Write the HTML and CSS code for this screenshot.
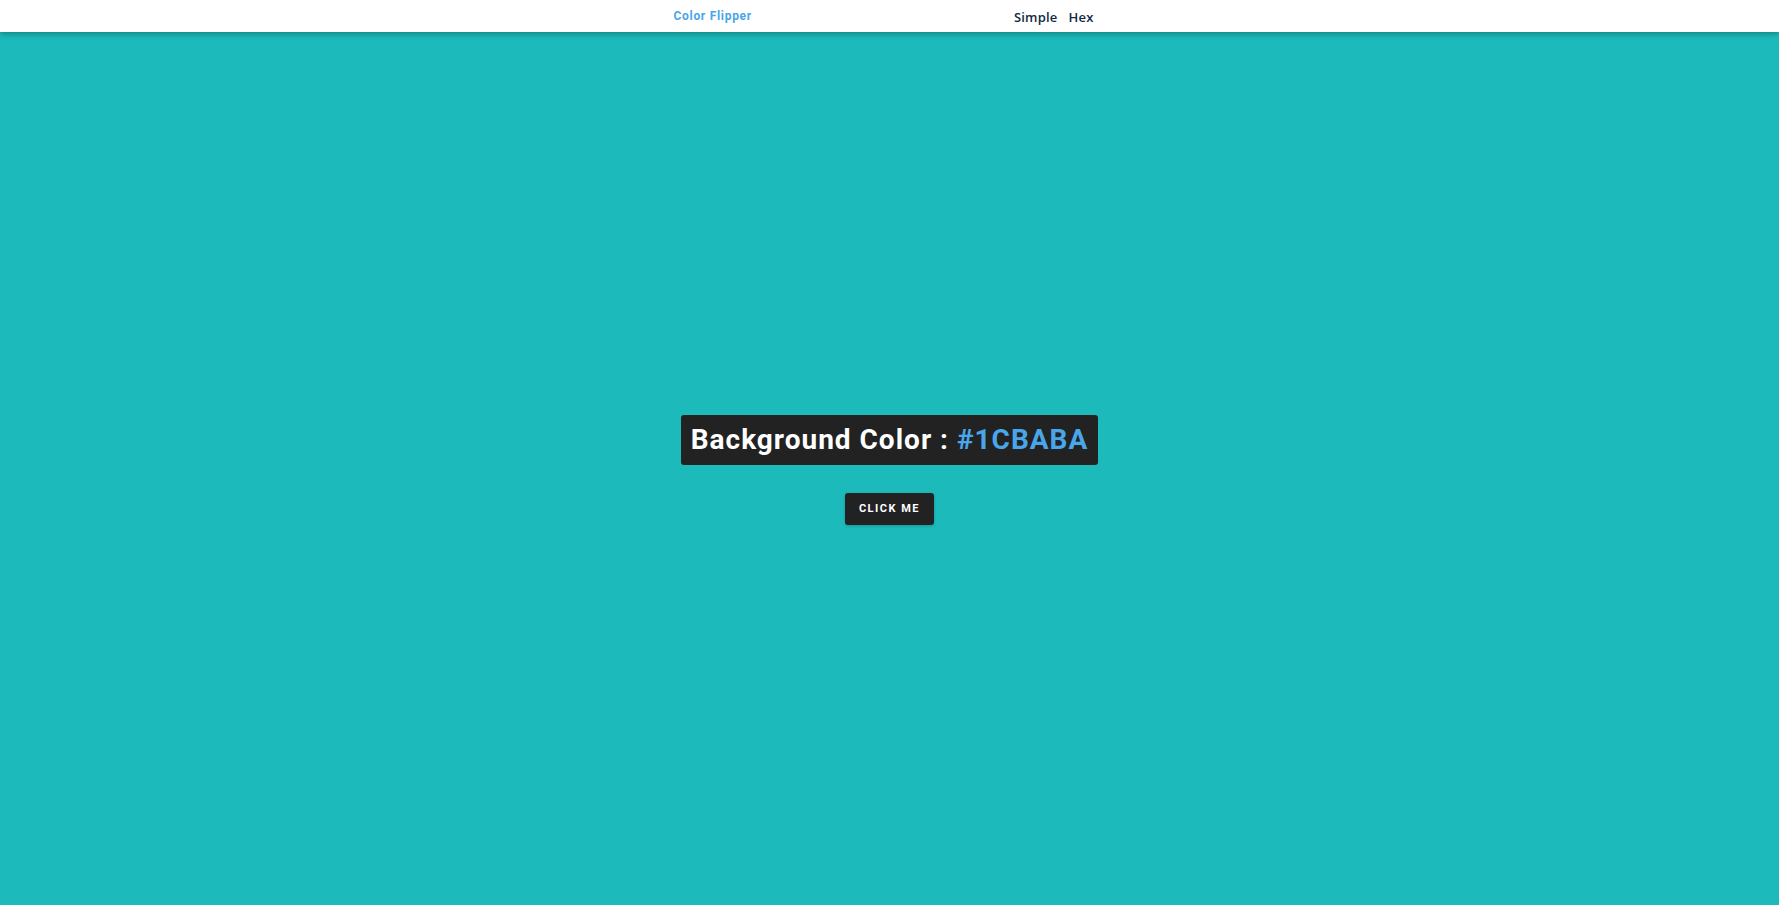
FILE: index.html
```html
<!DOCTYPE html>
<html lang="en">
<head>
<meta charset="utf-8">
<title>Color Flipper</title>
<link rel="stylesheet" href="styles.css">
</head>
<body>
<nav class="nav">
  <div class="nav-center">
    <h4 class="brand">Color Flipper</h4>
    <ul class="nav-links">
      <li><a href="#">Simple</a></li>
      <li><a href="#">Hex</a></li>
    </ul>
  </div>
</nav>
<main class="main">
  <div class="container">
    <h2 class="title">Background Color : <span class="color">#1CBABA</span></h2>
    <button class="btn">click me</button>
  </div>
</main>
</body>
</html>
```
FILE: styles.css
```css
* { box-sizing: border-box; margin: 0; padding: 0; }
html, body { height: 100%; }
body {
  font-family: Roboto, "Liberation Sans", sans-serif;
  background: #1cbaba;
  display: flex;
  flex-direction: column;
}
.nav {
  height: 32px;
  background: #fff;
  box-shadow: 0 2px 6px rgba(0,0,0,0.3);
  position: relative;
  z-index: 1;
  flex-shrink: 0;
}
.nav-center {
  width: 432px;
  height: 100%;
  margin: 0 auto;
  display: flex;
  align-items: center;
  justify-content: space-between;
  padding-right: 12px;
}
.brand {
  font-size: 12px;
  font-weight: 700;
  color: #49a6e9;
  letter-spacing: 0.7px;
}
.nav-links {
  list-style: none;
  display: flex;
  gap: 11px;
}
.nav-links a {
  text-decoration: none;
  color: #102a42;
  font-family: "Open Sans", sans-serif;
  font-size: 13px;
  font-weight: 600;
  letter-spacing: 0.2px;
}
.main {
  flex: 1;
  display: flex;
  align-items: center;
  justify-content: center;
}
.container {
  display: flex;
  flex-direction: column;
  align-items: center;
  gap: 28px;
  padding-top: 2px;
}
.title {
  background: #222;
  color: #fff;
  font-size: 28px;
  font-weight: 700;
  letter-spacing: 1px;
  line-height: 50px;
  height: 50px;
  padding: 0 10px;
  border-radius: 3px;
}
.color { color: #49a6e9; }
.btn {
  background: #222;
  color: #fff;
  border: none;
  border-radius: 3px;
  width: 89px;
  height: 32px;
  font-family: Roboto, "Liberation Sans", sans-serif;
  font-size: 11px;
  font-weight: 700;
  text-transform: uppercase;
  letter-spacing: 1.5px;
  box-shadow: 0 1px 3px rgba(0,0,0,0.2);
}
```
